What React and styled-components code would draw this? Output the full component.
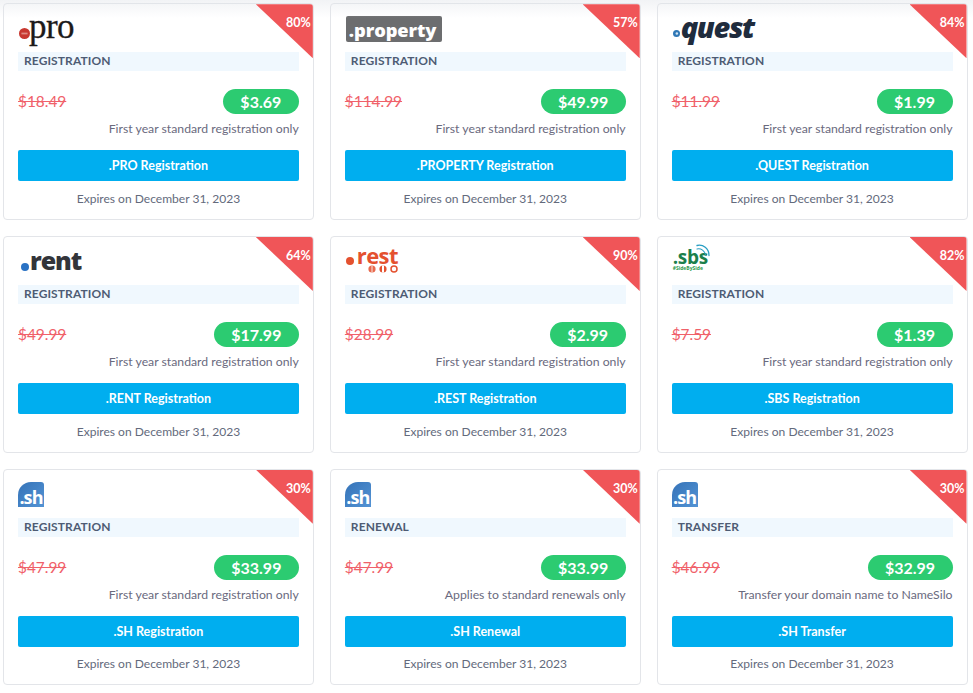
import React from "react";
import styled, { createGlobalStyle } from "styled-components";

const Global = createGlobalStyle`
  html, body { margin: 0; padding: 0; background: #fff; }
  body { font-family: "Lato", "Open Sans", sans-serif; color: #5f6b80; }
`;

const Page = styled.div`
  position: relative;
  width: 973px;
  height: 693px;
  overflow: hidden;
  box-sizing: border-box;
  padding: 3.3px 5.5px 0 3px;
`;
const TopShade = styled.div`
  position: absolute;
  inset: 0 0 auto 0;
  height: 18px;
  background: linear-gradient(to bottom, rgba(225, 228, 234, 0.45), rgba(225, 228, 234, 0));
  pointer-events: none;
`;
const Grid = styled.div`
  display: grid;
  grid-template-columns: repeat(3, 1fr);
  grid-auto-rows: 216.7px;
  gap: 16px;
`;
const Card = styled.article`
  position: relative;
  box-sizing: border-box;
  border: 1px solid #e3e5e9;
  border-radius: 4px;
  background: #fff;
  padding: 0 14px;
  display: flex;
  flex-direction: column;
  overflow: hidden;
`;
const Ribbon = styled.div`
  position: absolute;
  z-index: 2;
  top: 0;
  right: 0;
  width: 57px;
  height: 54px;
  background: #f05558;
  clip-path: polygon(0 0, 100% 0, 100% 100%);
  color: #fff;
  font-size: 12.5px;
  font-weight: 700;
  text-align: right;
  padding: 11px 2px 0 0;
  box-sizing: border-box;
  line-height: 15px;
`;
const LogoRow = styled.div`
  height: 48px;
  display: flex;
  align-items: center;
  flex: none;
  padding-top: 2px;
  box-sizing: border-box;
`;
const Dot = styled.svg`
  flex: none;
  display: block;
`;
const ProText = styled.span`
  font-family: "Liberation Serif", serif;
  font-size: 35px;
  line-height: 30px;
  color: #1c1a1a;
  letter-spacing: -0.6px;
  -webkit-text-stroke: 0.3px #1c1a1a;
  margin: -5px 0 0 -1px;
`;
const PropertyBox = styled.span`
  margin: 0 0 0 1px;
  width: 96px;
  height: 26px;
  border-radius: 2px;
  background: #6c6d6f;
  color: #fff;
  font-family: "Open Sans", sans-serif;
  font-size: 18.3px;
  font-weight: 800;
  line-height: 27px;
  padding-left: 3px;
  box-sizing: border-box;
  letter-spacing: -0.1px;
`;
const QuestText = styled.span`
  font-family: "Open Sans", sans-serif;
  font-style: italic;
  font-weight: 800;
  font-size: 29px;
  line-height: 30px;
  color: #1f2c3d;
  letter-spacing: -1.4px;
  margin: -5px 0 0 0;
`;
const RentText = styled.span`
  font-family: "Open Sans", sans-serif;
  font-weight: 800;
  font-size: 25px;
  line-height: 30px;
  color: #33353a;
  letter-spacing: -1.1px;
  margin: -4px 0 0 0;
`;
const RestStack = styled.div`
  display: flex;
  flex-direction: column;
  align-items: flex-end;
  margin: -3px 0 0 3px;
`;
const RestText = styled.span`
  font-family: "Open Sans", sans-serif;
  font-weight: 700;
  font-size: 22px;
  line-height: 17px;
  color: #e4512f;
  letter-spacing: -0.6px;
`;
const RestIcons = styled.svg`
  display: block;
  margin-top: 1px;
`;
const SbsStack = styled.div`
  position: relative;
  display: flex;
  flex-direction: column;
  margin: -3px 0 0 1px;
`;
const SbsText = styled.span`
  font-family: "Open Sans", sans-serif;
  font-weight: 700;
  font-size: 19px;
  line-height: 15px;
  color: #1b7f4c;
  letter-spacing: -0.3px;
`;
const SbsTag = styled.span`
  font-family: "Open Sans", sans-serif;
  font-weight: 700;
  font-size: 5px;
  line-height: 6px;
  color: #2d9a4e;
`;
const SbsArc = styled.svg`
  position: absolute;
  top: -6px;
  left: 23px;
`;
const ShBox = styled.div`
  width: 26px;
  height: 25px;
  margin: -1px 0 0 0;
  background: linear-gradient(135deg, #3573b8, #5393d4);
  border-top-left-radius: 13px;
  border-top-right-radius: 3px;
  display: flex;
  align-items: flex-end;
  justify-content: center;
  color: #fff;
  font-family: "Open Sans", sans-serif;
  font-weight: 700;
  font-size: 18px;
  line-height: 19px;
  letter-spacing: -0.9px;
`;
const Tag = styled.div`
  height: 19px;
  flex: none;
  background: #f0f8fe;
  color: #4e5c74;
  font-size: 12px;
  font-weight: 700;
  line-height: 17.5px;
  padding-left: 6px;
  letter-spacing: 0.1px;
`;
const PriceRow = styled.div`
  display: flex;
  justify-content: space-between;
  align-items: center;
  margin-top: 18px;
  height: 25px;
  flex: none;
`;
const OldPrice = styled.s`
  color: #f0616a;
  font-size: 15.4px;
  line-height: 25px;
`;
const Pill = styled.span`
  min-width: ${p => p.$w}px;
  height: 25px;
  box-sizing: border-box;
  border-radius: 13px;
  background: #2ccb71;
  color: #fff;
  font-size: 16px;
  font-weight: 700;
  line-height: 25px;
  text-align: center;
`;
const Note = styled.p`
  margin: 7px 0 0;
  font-size: 12.25px;
  line-height: 16px;
  text-align: right;
  color: #6a6a7e;
  flex: none;
`;
const Action = styled.button`
  display: block;
  width: 100%;
  height: 31px;
  flex: none;
  margin-top: 13px;
  border: 0;
  border-radius: 2px;
  background: #00aeef;
  color: #fff;
  font-family: inherit;
  font-size: 12.5px;
  font-weight: 700;
  padding: 0;
`;
const Expiry = styled.p`
  margin: 9.6px 0 0;
  font-size: 12.05px;
  line-height: 16px;
  text-align: center;
  color: #636a7c;
`;

const SmallDot = ({ size, color, children, style }) => (
  <Dot width={size} height={size} viewBox="0 0 10 10" style={style}>
    <circle cx="5" cy="5" r="5" fill={color} />
    {children}
  </Dot>
);

const logos = {
  pro: (
    <>
      <SmallDot size={11} color="#c8372f" style={{ marginTop: 8, marginLeft: 1 }}>
        <rect x="2.2" y="4.2" width="5.6" height="1.6" fill="#e08a82" />
      </SmallDot>
      <ProText>pro</ProText>
    </>
  ),
  property: <PropertyBox>.property</PropertyBox>,
  quest: (
    <>
      <SmallDot size={7} color="#2f77b5" style={{ marginTop: 9, marginLeft: 1, marginRight: 1 }}>
        <circle cx="5.5" cy="5" r="1.8" fill="#cfe3f2" />
      </SmallDot>
      <QuestText>quest</QuestText>
    </>
  ),
  rent: (
    <>
      <SmallDot size={8} color="#2a72c4" style={{ marginTop: 10, marginLeft: 3, marginRight: 1 }} />
      <RentText>rent</RentText>
    </>
  ),
  rest: (
    <>
      <SmallDot size={8} color="#e4512f" style={{ marginTop: -2, marginLeft: 1 }} />
      <RestStack>
        <RestText>rest</RestText>
        <RestIcons width="30" height="8" viewBox="0 0 30 8">
          <circle cx="4" cy="4" r="3.6" fill="#e86a4e" />
          <rect x="3.3" y="0.5" width="1.4" height="7" fill="#f5c5b8" />
          <circle cx="15" cy="4" r="3.6" fill="#e4512f" />
          <rect x="14" y="0.5" width="2" height="7" fill="#fff" />
          <circle cx="26" cy="4" r="3" fill="none" stroke="#e4512f" strokeWidth="1.5" />
        </RestIcons>
      </RestStack>
    </>
  ),
  sbs: (
    <SbsStack>
      <SbsArc width="15" height="16" viewBox="0 0 15 16" fill="none" strokeLinecap="round">
        <path d="M1 1.5c6-1.5 12 3 12 10" stroke="#2a9fc4" strokeWidth="1.3" />
        <path d="M1 5c4-1 8 2 8.5 6" stroke="#2a9fc4" strokeWidth="1.1" />
      </SbsArc>
      <SbsText>.sbs</SbsText>
      <SbsTag>#SideBySide</SbsTag>
    </SbsStack>
  ),
  sh: <ShBox>.sh</ShBox>,
};

const cards = [
  { logo: "pro", off: "80%", tag: "REGISTRATION", old: "$18.49", price: "$3.69", w: 76, note: "First year standard registration only", cta: ".PRO Registration" },
  { logo: "property", off: "57%", tag: "REGISTRATION", old: "$114.99", price: "$49.99", w: 85, note: "First year standard registration only", cta: ".PROPERTY Registration" },
  { logo: "quest", off: "84%", tag: "REGISTRATION", old: "$11.99", price: "$1.99", w: 76, note: "First year standard registration only", cta: ".QUEST Registration" },
  { logo: "rent", off: "64%", tag: "REGISTRATION", old: "$49.99", price: "$17.99", w: 85, note: "First year standard registration only", cta: ".RENT Registration" },
  { logo: "rest", off: "90%", tag: "REGISTRATION", old: "$28.99", price: "$2.99", w: 76, note: "First year standard registration only", cta: ".REST Registration" },
  { logo: "sbs", off: "82%", tag: "REGISTRATION", old: "$7.59", price: "$1.39", w: 76, note: "First year standard registration only", cta: ".SBS Registration" },
  { logo: "sh", off: "30%", tag: "REGISTRATION", old: "$47.99", price: "$33.99", w: 85, note: "First year standard registration only", cta: ".SH Registration" },
  { logo: "sh", off: "30%", tag: "RENEWAL", old: "$47.99", price: "$33.99", w: 85, note: "Applies to standard renewals only", cta: ".SH Renewal" },
  { logo: "sh", off: "30%", tag: "TRANSFER", old: "$46.99", price: "$32.99", w: 85, note: "Transfer your domain name to NameSilo", cta: ".SH Transfer" },
];

export default function App() {
  return (
    <Page>
      <Global />
      <Grid>
        {cards.map((c, i) => (
          <Card key={i}>
            <Ribbon>{c.off}</Ribbon>
            <LogoRow>{logos[c.logo]}</LogoRow>
            <Tag>{c.tag}</Tag>
            <PriceRow>
              <OldPrice>{c.old}</OldPrice>
              <Pill $w={c.w}>{c.price}</Pill>
            </PriceRow>
            <Note>{c.note}</Note>
            <Action>{c.cta}</Action>
            <Expiry>Expires on December 31, 2023</Expiry>
          </Card>
        ))}
      </Grid>
      <TopShade />
    </Page>
  );
}
